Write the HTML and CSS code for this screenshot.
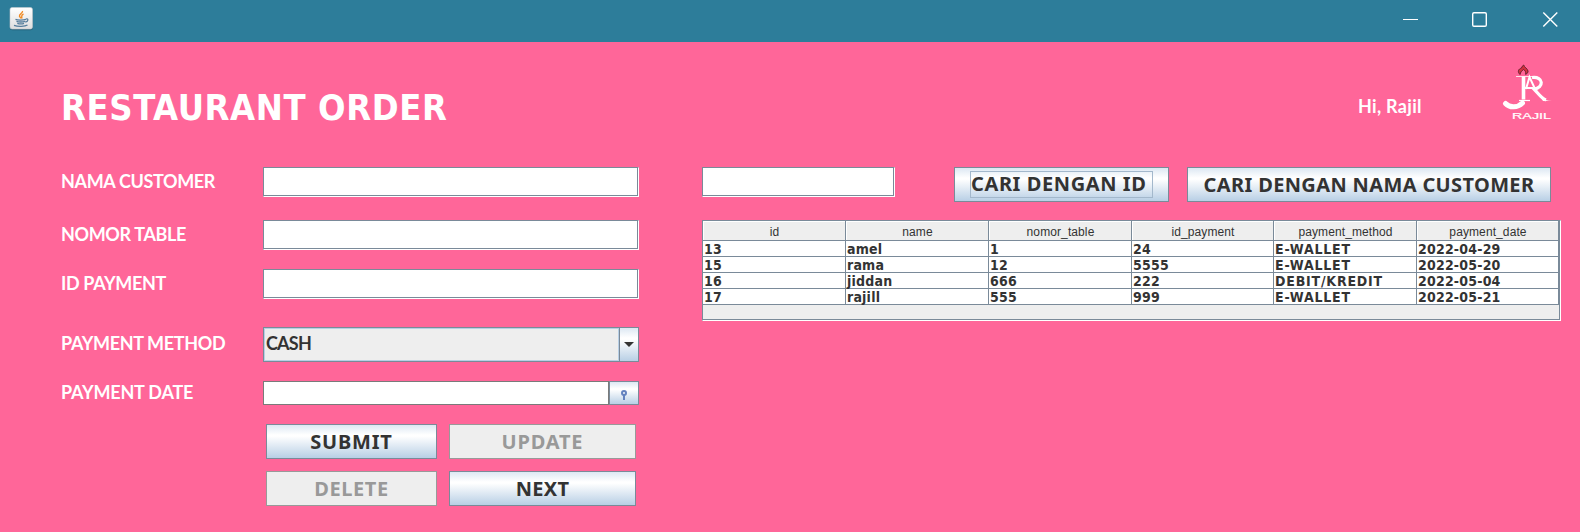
FILE: index.html
```html
<!DOCTYPE html>
<html lang="id">
<head>
<meta charset="utf-8">
<title>Restaurant Order</title>
<link rel="stylesheet" href="styles.css">
</head>
<body>
<div class="titlebar">
  <svg class="java" width="25" height="24" viewBox="0 0 25 24">
    <defs><linearGradient id="tile" x1="0" y1="0" x2="0" y2="1"><stop offset="0" stop-color="#fff"/><stop offset="1" stop-color="#dedede"/></linearGradient></defs>
    <rect x=".9" y=".9" width="23" height="22.4" rx="2.5" fill="#236078"/>
    <rect x="1" y=".5" width="22.5" height="21.5" rx="2" fill="url(#tile)" stroke="#c2cbd0" stroke-width=".6"/>
    <path d="M13.500 4c.7 2-3.700 3-3 5.200.3.900 1.500 1.600 1.700 2.500M14.500 7c-3 1.300-1.500 2.300-1.700 4.500" fill="none" stroke="#f08a24" stroke-width="1.400"/>
    <path d="M6.500 12.300c2 1 7.500 1 10.500 0M7.500 14.300c2 .9 6.500.9 8.500 0M8.300 16.300c2 .7 5 .7 6.700 0M17 12c2.800-.9 2.300 2.600-.7 3M5 18.300c4 1.500 11 1.200 13.500-.3" fill="none" stroke="#557d9c" stroke-width="1.300"/>
  </svg>
  <svg class="controls" width="154" height="16" viewBox="0 0 154 16" fill="none" stroke="#fff">
    <path d="M0 8.500h15" stroke-width="1"/>
    <rect x="69.700" y="1.700" width="13.600" height="13.600" rx="1.300" stroke-width="1.400"/>
    <path d="M140.300 1.500l14 14M154.300 1.500l-14 14" stroke-width="1.400"/>
  </svg>
</div>
<main class="frame">
  <header class="head">
    <h1 class="title">RESTAURANT ORDER</h1>
    <span class="greeting">Hi, Rajil</span>
    <svg class="logo" width="50" height="56" viewBox="0 0 50 56">
      <path d="M17 10.500c-3-3-1.500-5.500 1.500-6.500.3-1.200 1-2.300 2.200-3 .3 2.200 3.800 3.500 4.300 6 .2 1.500-1 2.700-2.300 3.500.5-2.500-.7-4.200-2.300-5-1.500 1.500-3 2.500-3.400 5z" fill="#d52f40" stroke="#63232c" stroke-width="1"/>
      <path d="M13 12.500h21" stroke="#fff" stroke-width=".8"/>
      <path d="M20.500 12.500v23" stroke="#fff" stroke-width="3.600"/>
      <path d="M16 36.500h11" stroke="#fff" stroke-width="1.200"/>
      <path d="M23 25L26.500 13l6 13M22 24h8" fill="none" stroke="#fff" stroke-width="2"/>
      <path d="M29 13.500c12-1.500 12 10.500 2 11.500 4 4 7.500 9.500 12 11" fill="none" stroke="#fff" stroke-width="3.200"/>
      <path d="M38 34q4 2.500 11 3H40z" fill="#fff"/>
      <path d="M2.500 39.500c4 4.500 12 4.500 17-.5" fill="none" stroke="#fff" stroke-width="5" stroke-linecap="round"/>
      <text class="logo-name" x="9" y="55" textLength="39" lengthAdjust="spacingAndGlyphs">RAJIL</text>
    </svg>
  </header>
  <div class="content">
    <form class="form">
      <label class="label name">NAMA CUSTOMER</label><div class="input"></div>
      <label class="label table-no">NOMOR TABLE</label><div class="input"></div>
      <label class="label id-pay">ID PAYMENT</label><div class="input"></div>
      <label class="label method">PAYMENT METHOD</label>
      <div class="combo"><span class="combo-value">CASH</span><span class="combo-arrow"><svg width="10" height="5" viewBox="0 0 10 5"><path d="M0 0h10L5 5z" fill="#333"/></svg></span></div>
      <label class="label date">PAYMENT DATE</label>
      <div class="datepick"><div class="date-text"></div><span class="date-btn"><svg width="6" height="10" viewBox="0 0 6 10" fill="none" stroke="#6382bf" stroke-width="2"><circle cx="3" cy="3" r="2"/><path d="M3 5v5"/></svg></span></div>
      <div class="actions">
        <button type="button" class="btn submit"><span>SUBMIT</span></button>
        <button type="button" class="btn update" disabled><span>UPDATE</span></button>
        <button type="button" class="btn delete" disabled><span>DELETE</span></button>
        <button type="button" class="btn next"><span>NEXT</span></button>
      </div>
    </form>
    <section class="results">
      <div class="search">
        <div class="input query"></div>
        <button type="button" class="btn by-id"><span class="focus">CARI DENGAN ID</span></button>
        <button type="button" class="btn by-name"><span>CARI DENGAN NAMA CUSTOMER</span></button>
      </div>
      <div class="scroll">
        <div class="row header"><span>id</span><span>name</span><span>nomor_table</span><span>id_payment</span><span>payment_method</span><span>payment_date</span></div>
        <div class="row"><span>13</span><span>amel</span><span>1</span><span>24</span><span class="pay">E-WALLET</span><span>2022-04-29</span></div>
        <div class="row"><span>15</span><span>rama</span><span>12</span><span>5555</span><span class="pay">E-WALLET</span><span>2022-05-20</span></div>
        <div class="row"><span>16</span><span>jiddan</span><span>666</span><span>222</span><span class="pay">DEBIT/KREDIT</span><span>2022-05-04</span></div>
        <div class="row"><span>17</span><span>rajill</span><span>555</span><span>999</span><span class="pay">E-WALLET</span><span>2022-05-21</span></div>
      </div>
    </section>
  </div>
</main>
</body>
</html>
```
FILE: styles.css
```css
* { box-sizing: border-box; }
body { margin: 0; width: 1580px; height: 532px; overflow: hidden; background: #ff6699; color: #333; font-family: "Noto Sans", sans-serif; }
.titlebar { height: 42px; background: #2d7d9a; display: flex; justify-content: space-between; padding: 7px 23px 0 9px; }
.controls { margin-top: 4px; overflow: visible; }
.head { height: 125px; display: flex; align-items: flex-start; padding-left: 61px; color: #fff; }
.title { margin: 41px 0 0; width: 1297px; font: 700 36px/50px "DejaVu Sans Condensed", "DejaVu Sans", sans-serif; font-stretch: condensed; letter-spacing: .6px; white-space: nowrap; }
.greeting { width: 145px; margin-top: 51px; font: 700 18px/26px Lato, sans-serif; letter-spacing: .3px; }
.logo { margin-top: 22px; overflow: visible; }
.logo-name { font: 8.500px "Liberation Sans", sans-serif; fill: #fff; stroke: #fff; stroke-width: .2; }
.content { display: flex; padding-left: 61px; gap: 63px; }
.form { display: grid; grid-template-columns: 202px 376px; grid-template-rows: 53px 49px 58px 54px 43px auto; align-items: start; }
.label { color: #fff; font: 700 18px/26px Lato, sans-serif; letter-spacing: -.35px; white-space: nowrap; }
.name, .table-no, .id-pay { margin-top: 1px; }
.method { margin-top: 3px; }
.date { margin-top: -2px; letter-spacing: -.2px; }
.input { height: 30px; background: #fff; border: 1px solid; border-color: #7a8a99 #fff #fff #7a8a99; box-shadow: inset -1px -1px #7a8a99; }
.combo { height: 35px; display: flex; border: 1px solid #7a8a99; background: #eee; }
.combo-value { flex: 1; border: 1px solid #b8cfe5; padding-left: 1px; font: 700 18px/28px Lato, sans-serif; letter-spacing: -.8px; }
.combo-arrow { width: 19px; border-left: 1px solid #7a8a99; display: grid; place-items: center; }
.combo-arrow, .date-btn, .btn { background: linear-gradient(#dde8f3 0%, #fff 30%, #fff 34%, #b8cfe5 100%); }
.datepick { height: 24px; display: flex; }
.date-text { flex: 1; background: #fff; border: 1px solid #7a7a7a; }
.date-btn { width: 30px; border: 1px solid #7a8a99; display: grid; place-items: center; padding-top: 3px; }
.actions { grid-column: 2; display: grid; grid-template-columns: 171px 187px; gap: 12px; padding-left: 3px; }
.btn { height: 35px; padding: 0; border: 1px solid #7a8a99; font: 700 20px/26px "Noto Sans", sans-serif; color: #333; white-space: nowrap; display: flex; align-items: center; justify-content: center; }
.btn:disabled { background: #eee; border-color: #999; color: #999; }
.submit, .update { letter-spacing: .8px; }
.delete { letter-spacing: .6px; }
.next { letter-spacing: .3px; }
.by-id { width: 215px; margin-right: 18px; letter-spacing: .6px; }
.by-name { width: 364px; letter-spacing: .36px; }
.search { display: flex; align-items: flex-start; height: 53px; }
.query { width: 193px; margin-right: 59px; }
.focus { width: 183px; height: 27px; border: 1px solid #a3b8cc; text-align: left; line-height: 24px; }
.scroll { width: 859px; height: 101px; background: #eee; border: 1px solid; border-color: #7a8a99 #fff #fff #7a8a99; box-shadow: inset -1px -1px #7a8a99; }
.row { display: grid; grid-template-columns: 143px 143px 143px 142px 143px 142px; width: 856px; height: 16px; background: #fff; font: 700 14px/16px "DejaVu Sans Condensed", "DejaVu Sans", sans-serif; font-stretch: condensed; letter-spacing: .2px; }
.row span { height: 100%; min-height: 0; border: solid #7a8a99; border-width: 0 1px 1px 0; padding-left: 1px; white-space: nowrap; }
.row .pay { letter-spacing: .8px; }
.header { height: 20px; font: 12px/22px "Liberation Sans", sans-serif; letter-spacing: .1px; }
.header span { background: #eee; box-shadow: inset 1px 1px #fff; text-align: center; }
```
